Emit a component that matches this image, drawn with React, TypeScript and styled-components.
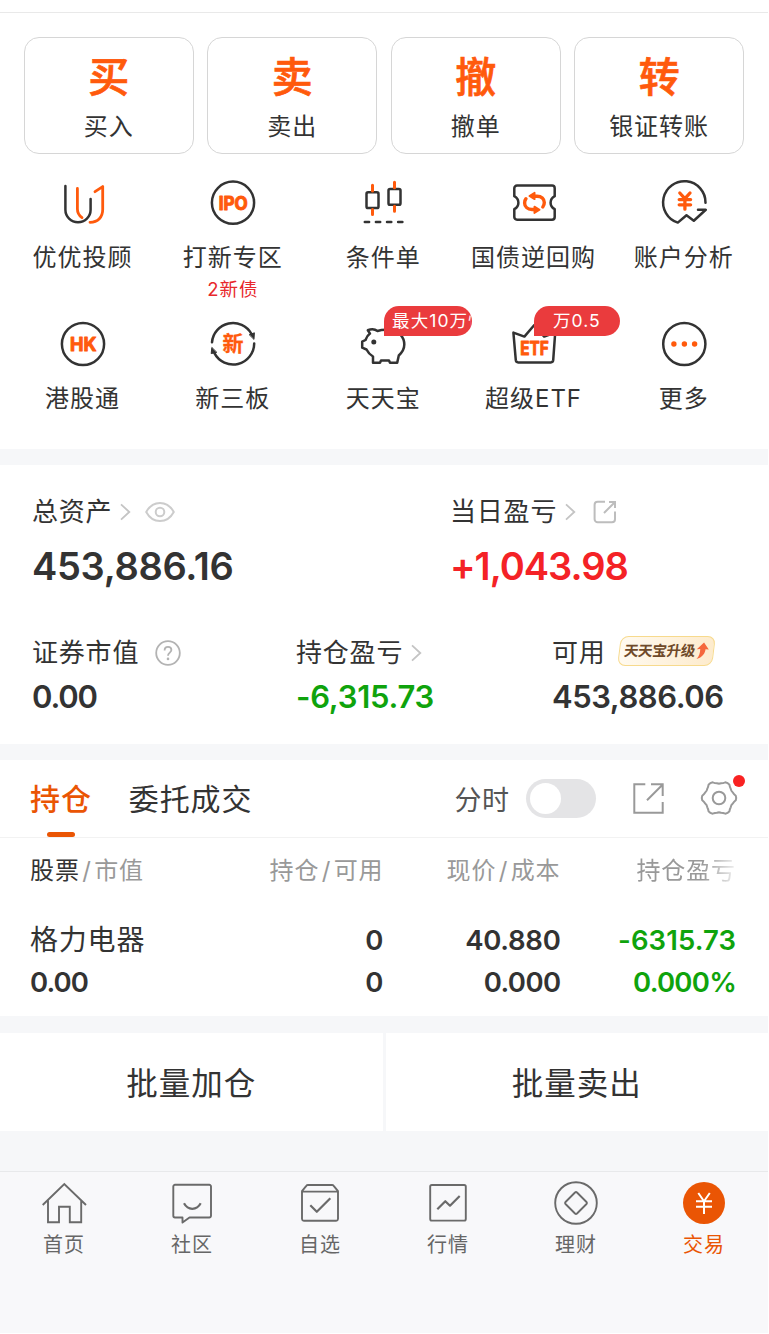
import React from "react";
import styled, { createGlobalStyle } from "styled-components";

const INK = "#333333";
const ORANGE = "#ff5a0c";
const BRAND = "#ea5504";
const RED = "#f42226";
const GREEN = "#0fa30c";

const GlobalStyle = createGlobalStyle`
  * { box-sizing: border-box; }
  body {
    margin: 0;
    background: #fff;
    color: ${INK};
    font-family: Inter, "Noto Sans CJK SC", sans-serif;
  }
  svg { display: block; flex: none; }
`;

const Page = styled.div`
  width: 768px;
  height: 1334px;
  overflow: hidden;
  display: flex;
  flex-direction: column;
`;

const TopRule = styled.div`
  height: 13px;
  border-bottom: 1px solid #e9e9e9;
  flex: none;
`;

const Spacer = styled.div<{ $h: number }>`
  height: ${(p) => p.$h}px;
  flex: none;
  background: #f6f7f9;
`;

/* ---------- trade buttons ---------- */

const TradeRow = styled.div`
  display: grid;
  grid-template-columns: repeat(4, 1fr);
  gap: 13.7px;
  padding: 24px 24px 0 24px;
`;

const TradeCard = styled.div`
  height: 117px;
  border: 1.3px solid #d6d6d6;
  border-radius: 15px;
  display: flex;
  flex-direction: column;
  align-items: center;
  padding-top: 15px;
`;

const TradeGlyph = styled.div`
  font-size: 41px;
  line-height: 48px;
  font-weight: 500;
  -webkit-text-stroke: 0.7px ${ORANGE};
  color: ${ORANGE};
`;

const TradeLabel = styled.div`
  margin-top: 11px;
  font-size: 24px;
  line-height: 30px;
  letter-spacing: 1px;
`;

/* ---------- shortcuts ---------- */

const ShortcutGrid = styled.div`
  display: grid;
  grid-template-columns: repeat(5, 1fr);
  grid-template-rows: 140.5px 129px;
  padding: 25px 9px 0 7.4px;
`;

const Shortcut = styled.div`
  position: relative;
  display: flex;
  flex-direction: column;
  align-items: center;
`;

const ShortcutLabel = styled.div`
  margin-top: 16px;
  font-size: 24px;
  line-height: 30px;
  letter-spacing: 1px;
  white-space: nowrap;
`;

const ShortcutNote = styled.div`
  margin-top: 3px;
  font-size: 18.5px;
  line-height: 26px;
  letter-spacing: 1px;
  color: #e8282c;
`;

const Bubble = styled.div<{ $w: number; $center?: boolean }>`
  position: absolute;
  left: 75.5px;
  top: -13.5px;
  width: ${(p) => p.$w}px;
  height: 29.5px;
  padding: 0 ${(p) => (p.$center ? 0 : 1)}px 0 ${(p) => (p.$center ? 0 : 8.5)}px;
  border-radius: 15px 15px 15px 0;
  background: #ea3b3d;
  color: #fff;
  text-align: ${(p) => (p.$center ? "center" : "left")};
`;

const BubbleText = styled.div`
  overflow: hidden;
  white-space: nowrap;
  font-size: 17.5px;
  line-height: 30.5px;
  letter-spacing: 1.1px;
`;

const IconText = styled.text`
  font-family: Inter, "Noto Sans CJK SC", sans-serif;
  font-weight: 700;
  fill: ${ORANGE};
  text-anchor: middle;
`;

const Glyph = ({ children, size = 48 }: { children: React.ReactNode; size?: number }) => (
  <svg width={size} height={size} viewBox="0 0 48 48" fill="none" stroke={INK} strokeWidth={2.5} strokeLinecap="round" strokeLinejoin="round">
    {children}
  </svg>
);

const AdvisorIcon = () => (
  <Glyph>
    <path d="M6.4 6.9V30.7A12.6 12.6 0 0 0 31.6 30.7V20" />
    <g stroke={ORANGE} strokeWidth={2.8}>
      <path d="M18.4 9.5V30C18.4 34 20 36.5 23 38.7" />
      <path d="M36 12.7L43.7 7.6V30.5C43.7 38 39 43.3 31 43.3" />
    </g>
  </Glyph>
);

const IpoIcon = () => (
  <Glyph>
    <circle cx="24" cy="23.7" r="21.1" />
    <IconText x="24.2" y="30.6" fontSize="18.5" textLength="29" lengthAdjust="spacingAndGlyphs" stroke={ORANGE} strokeWidth={1.1}>IPO</IconText>
  </Glyph>
);

const CandleIcon = () => (
  <Glyph>
    <rect x="7.5" y="13.3" width="12" height="15.8" rx="1.6" />
    <rect x="29.5" y="10" width="12" height="15.8" rx="1.6" />
    <path d="M13.5 6.2V12M13.5 30.5V35.5M35.5 3.2V8.7M35.5 27.2V32.3" stroke={ORANGE} strokeWidth={3} />
    <path d="M5.8 43.1H44" strokeDasharray="4.3 6.8" />
  </Glyph>
);

const TicketIcon = () => (
  <Glyph>
    <path d="M7 6.6H42A2.7 2.7 0 0 1 44.7 9.3V17.2C41.8 18.8 40.6 21 40.6 23.7S41.8 28.6 44.7 30.2V38A2.7 2.7 0 0 1 42 40.7H7A2.7 2.7 0 0 1 4.3 38V30.2C7.2 28.6 8.4 26.4 8.4 23.7S7.2 18.8 4.3 17.2V9.3A2.7 2.7 0 0 1 7 6.6Z" />
    <g stroke={ORANGE} strokeWidth={3.4}>
      <path d="M24 17.2H27C31.5 17.2 34.3 20 34.3 23.6C34.3 25.4 33.8 26.8 32.8 28" />
      <path d="M25 30.5H22C17.5 30.5 14.6 27.6 14.6 24C14.6 22.2 15.1 20.8 16 19.7" />
    </g>
    <path d="M19.4 17L24.6 13.8V20.2ZM29.6 30.8L24.4 27.6V34Z" fill={ORANGE} stroke={ORANGE} strokeWidth={1.8} />
  </Glyph>
);

const AnalysisIcon = () => (
  <Glyph>
    <path d="M45.5 23.7A21.2 21.2 0 1 0 17.8 43.6L26.5 36.2L33.8 41.7L45.8 30.8H38" />
    <path d="M19.8 14L24.9 19.6L30 14M24.9 19.6V30.2M19.2 20.6H30.6M19.2 25.8H30.6" stroke={ORANGE} strokeWidth={3.3} />
  </Glyph>
);

const HkIcon = () => (
  <Glyph>
    <circle cx="24" cy="24" r="21.1" />
    <IconText x="24.3" y="30.8" fontSize="18.5" textLength="26.5" lengthAdjust="spacingAndGlyphs" stroke={ORANGE} strokeWidth={1}>HK</IconText>
  </Glyph>
);

const NewBoardIcon = () => (
  <Glyph>
    <path d="M3 22.3A21.1 21.1 0 0 1 42.4 13.8M45.2 23.6A21.1 21.1 0 0 1 5.4 33.2" />
    <path d="M40.6 14.6L45.4 12.8L45 19ZM7.4 32.4L2.2 33.6L2.8 27.8Z" fill={INK} strokeWidth={1} />
    <IconText x="24" y="31.4" fontSize="21" stroke={ORANGE} strokeWidth={0.3}>新</IconText>
  </Glyph>
);

const PigIcon = () => (
  <Glyph>
    <path d="M8.8 10.2C12 8.8 16 9 18.5 11C22 9.7 28 9.5 32 10C40 11 45.3 17 45.3 24.5C45.3 29.5 42.5 33 39.8 35.5L38.2 42.8H31L30 40.5H22L21 42.8H14V36.5C11 34.8 9 32.5 7.5 29.5L3.2 27.7V21.7L6.5 20C7.5 17 9 15 11 13.6Z" />
    <circle cx="14.8" cy="22" r="2.5" fill={INK} stroke="none" />
  </Glyph>
);

const EtfIcon = () => (
  <Glyph>
    <path d="M3.4 12.6L14.4 16.6L24.3 5L34.2 16.6L45.2 12.6L43.2 40.2A2.5 2.5 0 0 1 40.8 42.4H8.2A2.5 2.5 0 0 1 5.8 40.2Z" />
    <IconText x="24.5" y="35" fontSize="18.5" textLength="28.5" lengthAdjust="spacingAndGlyphs" stroke={ORANGE} strokeWidth={1}>ETF</IconText>
  </Glyph>
);

const MoreIcon = () => (
  <Glyph>
    <circle cx="24.3" cy="24" r="21.1" />
    <g fill={ORANGE} stroke="none">
      <circle cx="13.9" cy="24" r="2.7" />
      <circle cx="24.4" cy="24" r="2.7" />
      <circle cx="34.6" cy="24" r="2.7" />
    </g>
  </Glyph>
);

const shortcuts: { label: string; icon: React.ReactNode; note?: string; bubble?: string; center?: boolean; w?: number }[] = [
  { label: "优优投顾", icon: <AdvisorIcon /> },
  { label: "打新专区", icon: <IpoIcon />, note: "2新债" },
  { label: "条件单", icon: <CandleIcon /> },
  { label: "国债逆回购", icon: <TicketIcon /> },
  { label: "账户分析", icon: <AnalysisIcon /> },
  { label: "港股通", icon: <HkIcon /> },
  { label: "新三板", icon: <NewBoardIcon /> },
  { label: "天天宝", icon: <PigIcon />, bubble: "最大10万快取", w: 88 },
  { label: "超级ETF", icon: <EtfIcon />, bubble: "万0.5", center: true, w: 86 },
  { label: "更多", icon: <MoreIcon /> },
];

/* ---------- assets ---------- */

const Assets = styled.section`
  height: 279px;
  flex: none;
  padding: 31px 0 0 32px;
`;

const AssetRow = styled.div<{ $cols: string }>`
  display: grid;
  grid-template-columns: ${(p) => p.$cols};
  & + & { margin-top: 47px; }
`;

const AssetLabel = styled.div`
  display: flex;
  align-items: center;
  height: 32px;
  font-size: 26px;
  line-height: 32px;
  letter-spacing: 0.8px;
  white-space: nowrap;
`;

const LabelText = styled.span`
  padding-top: 1px;
`;

const Gap = styled.span<{ $w: number }>`
  width: ${(p) => p.$w}px;
  flex: none;
`;

const Amount = styled.div<{ $color?: string; $track: number }>`
  margin-top: 14px;
  height: 48px;
  font-size: 38px;
  line-height: 48px;
  font-weight: 600;
  letter-spacing: ${(p) => p.$track}px;
  color: ${(p) => p.$color ?? INK};
`;

const SubAmount = styled.div<{ $color?: string; $track: number }>`
  margin-top: 8px;
  font-size: 31px;
  line-height: 40px;
  font-weight: 600;
  letter-spacing: ${(p) => p.$track}px;
  color: ${(p) => p.$color ?? INK};
`;

const UpgradeTag = styled.span`
  display: flex;
  align-items: center;
  gap: 1px;
  width: 95px;
  height: 30px;
  margin-top: -3px;
  padding-left: 4px;
  border: 1.5px solid #f7da8d;
  border-radius: 8px;
  background: linear-gradient(90deg, #fffaf0, #fdebcd);
  transform: skewX(-7deg);
  color: #6f4a2a;
  font-size: 14.5px;
  line-height: 20px;
  font-weight: 700;
  letter-spacing: -0.3px;
`;

const Chevron = () => (
  <svg width="11" height="18" viewBox="0 0 11 18" fill="none" stroke="#c4c4c4" strokeWidth="1.8">
    <path d="M1 1.3L9.3 9L1 16.7" />
  </svg>
);

const Eye = () => (
  <svg width="30" height="22" viewBox="0 0 30 22" fill="none" stroke="#cccccc" strokeWidth="2">
    <path d="M1.2 11C4.6 4.8 9.4 1.9 15 1.9S25.4 4.8 28.8 11C25.4 17.2 20.6 20.1 15 20.1S4.6 17.2 1.2 11Z" strokeLinejoin="round" />
    <circle cx="15" cy="11" r="4.3" />
  </svg>
);

const ShareRound = () => (
  <svg width="24" height="24" viewBox="0 0 24 24" fill="none" stroke="#bdbdbd" strokeWidth="2">
    <path d="M12 1.8H4.6A3 3 0 0 0 1.6 4.8V19.2A3 3 0 0 0 4.6 22.2H19A3 3 0 0 0 22 19.2V11.5" />
    <path d="M11 13L21.8 2.2M16 2H22V8" />
  </svg>
);

const Help = () => (
  <svg width="26" height="26" viewBox="0 0 26 26" fill="none" stroke="#b3b3b3" strokeWidth="1.8">
    <circle cx="13" cy="13" r="11.8" />
    <path d="M9.6 10.4C9.6 8.2 11 6.9 13 6.9S16.4 8.2 16.4 10.1C16.4 12.6 13 12.8 13 15.8" />
    <circle cx="13" cy="18.9" r="1.3" fill="#b3b3b3" stroke="none" />
  </svg>
);

const RiseArrow = () => (
  <svg width="13" height="18" viewBox="0 0 13 18">
    <path d="M7 0.5L12.6 7.6L9.3 7.3C9.5 11.5 7 15.5 1.5 17C4 14 4.4 11 4 7.1L0.6 7.2Z" fill="#f5673c" />
  </svg>
);

/* ---------- holdings ---------- */

const TabsRow = styled.div`
  display: flex;
  align-items: center;
  height: 78px;
  flex: none;
  padding-left: 30px;
  border-bottom: 1.5px solid #f2f2f2;
  font-size: 30px;
  letter-spacing: 0.9px;
`;

const Tab = styled.div<{ $active?: boolean }>`
  position: relative;
  height: 77px;
  line-height: 79px;
  margin-right: 37px;
  font-weight: ${(p) => (p.$active ? 500 : 400)};
  color: ${(p) => (p.$active ? BRAND : INK)};
  &::after {
    content: "";
    display: ${(p) => (p.$active ? "block" : "none")};
    position: absolute;
    left: 17px;
    bottom: 0;
    width: 27.5px;
    height: 5px;
    border-radius: 2.5px;
    background: ${BRAND};
  }
`;

const Tools = styled.div`
  display: flex;
  align-items: center;
  margin-left: auto;
  padding-right: 30.5px;
  color: #555;
  font-size: 27px;
  letter-spacing: 0.5px;
`;

const Toggle = styled.div`
  width: 70px;
  height: 39px;
  margin: 0 37px 0 16px;
  padding: 4px;
  border-radius: 20px;
  background: #e4e4e6;
  &::before {
    content: "";
    display: block;
    width: 31px;
    height: 31px;
    border-radius: 50%;
    background: #fff;
  }
`;

const SettingsWrap = styled.div`
  position: relative;
  margin-left: 36px;
`;

const Dot = styled.span`
  position: absolute;
  right: -7px;
  top: -4.5px;
  width: 12px;
  height: 12px;
  border-radius: 50%;
  background: #f92222;
`;

const ShareSquare = () => (
  <svg width="31" height="31" viewBox="0 0 31 31" fill="none" stroke="#999" strokeWidth="2">
    <path d="M12.3 1.3H1.3V29.7H29.7V19" />
    <path d="M14 17.3L29.5 1.8M18 1.3H29.7V13" />
  </svg>
);

const polar = (deg: number, r: number) => {
  const t = (deg * Math.PI) / 180;
  return `${(19 + r * Math.cos(t)).toFixed(2)} ${(19 + r * Math.sin(t)).toFixed(2)}`;
};

/* Six short teeth joined by shallow concave curves. */
const gearPath =
  `M${polar(-8, 16.9)}` +
  [0, 60, 120, 180, 240, 300]
    .map((a) => `Q${polar(a, 17.7)} ${polar(a + 8, 16.9)}Q${polar(a + 15, 15.3)} ${polar(a + 22, 14.9)}Q${polar(a + 30, 14)} ${polar(a + 38, 14.9)}Q${polar(a + 45, 15.3)} ${polar(a + 52, 16.9)}`)
    .join("") +
  "Z";

const Gear = () => (
  <svg width="38" height="38" viewBox="0 0 38 38" fill="none" stroke="#999" strokeWidth="2" strokeLinejoin="round">
    <path d={gearPath} />
    <circle cx="19" cy="19" r="6.3" />
  </svg>
);

const Table = styled.div`
  height: 178px;
  flex: none;
  padding: 16px 0 0 30px;
`;

const TableLine = styled.div`
  display: grid;
  grid-template-columns: 150px 203.5px 177px 175.5px;
  text-align: right;
  & > :first-child { text-align: left; }
`;

const HeadLine = styled(TableLine)`
  font-size: 24px;
  line-height: 33px;
  letter-spacing: 0.9px;
  color: #999;
  margin-bottom: 32px;
  b { font-weight: 400; color: ${INK}; }
  i { font-style: normal; padding: 0 2.4px; }
`;

const Faded = styled.span`
  mask-image: linear-gradient(90deg, #000 calc(100% - 34px), rgba(0, 0, 0, 0.15));
`;

const DataLine = styled(TableLine)`
  height: 42px;
  font-size: 27.5px;
  line-height: 42px;
  font-weight: 600;
`;

const Figure = styled.span<{ $track?: number; $loss?: boolean }>`
  letter-spacing: ${(p) => p.$track ?? 0}px;
  color: ${(p) => (p.$loss ? GREEN : INK)};
`;

const StockName = styled.span`
  font-size: 28px;
  line-height: 43px;
  font-weight: 400;
  letter-spacing: 0.8px;
`;

/* ---------- batch actions ---------- */

const BatchRow = styled.div`
  display: grid;
  grid-template-columns: 1fr 1fr;
  gap: 3px;
  height: 98px;
  flex: none;
  background: #f6f7f9;
`;

const BatchButton = styled.div`
  height: 98px;
  background: #fff;
  text-align: center;
  font-size: 31.5px;
  line-height: 102px;
  letter-spacing: 1px;
`;

/* ---------- bottom navigation ---------- */

const NavBar = styled.nav`
  display: grid;
  grid-template-columns: repeat(6, 1fr);
  height: 162px;
  flex: none;
  padding: 7px 0 0 0;
  border-top: 1.5px solid #e8e9eb;
  background: #f8f8fa;
`;

const NavItem = styled.div<{ $active?: boolean }>`
  display: flex;
  flex-direction: column;
  align-items: center;
  font-size: 20px;
  line-height: 26px;
  letter-spacing: 0.9px;
  color: ${(p) => (p.$active ? BRAND : "#666")};
  svg { margin-bottom: 5px; }
`;

const NavGlyph = ({ children }: { children: React.ReactNode }) => (
  <svg width="48" height="48" viewBox="0 0 48 48" fill="none" stroke="#6a6a6a" strokeWidth="1.9" strokeLinejoin="round">
    {children}
  </svg>
);

const navItems: { label: string; active?: boolean; icon: React.ReactNode }[] = [
  {
    label: "首页",
    icon: <path d="M2.7 26L24.3 5L46 26M8 21.3V43.3H19V27.8H29.8V43.3H41.2V21.3" strokeLinejoin="miter" />,
  },
  {
    label: "社区",
    icon: (
      <>
        <path d="M7 5.8H41.3A1.7 1.7 0 0 1 43 7.5V36.8A1.7 1.7 0 0 1 41.3 38.5H21.5L14.5 43.6V38.5H7A1.7 1.7 0 0 1 5.3 36.8V7.5A1.7 1.7 0 0 1 7 5.8Z" />
        <path d="M16 24.3C18 28 20.8 29.8 24.3 29.8S30.7 28 32.7 24.3" strokeWidth="2.2" />
      </>
    ),
  },
  {
    label: "自选",
    icon: (
      <>
        <path d="M6 12.2L10.3 6.8Q10.9 6 12 6H36Q37.1 6 37.7 6.8L42 12.2V40A1.9 1.9 0 0 1 40.1 41.7H7.9A1.9 1.9 0 0 1 6 40ZM6 12.6H42" />
        <path d="M14.3 26.3L20.8 32.8L34.3 19.3" strokeWidth="2.2" />
      </>
    ),
  },
  {
    label: "行情",
    icon: (
      <>
        <rect x="6.2" y="6" width="35.6" height="35.6" rx="1.6" />
        <path d="M13.3 30.3L21.3 22.2L26 26.7L35.7 17" strokeWidth="2.2" />
      </>
    ),
  },
  {
    label: "理财",
    icon: (
      <>
        <circle cx="24" cy="24" r="20.8" />
        <path d="M23 13.5Q24 12.6 25 13.5L34.5 23Q35.4 24 34.5 25L25 34.5Q24 35.4 23 34.5L13.5 25Q12.6 24 13.5 23Z" />
      </>
    ),
  },
  {
    label: "交易",
    active: true,
    icon: (
      <>
        <circle cx="24" cy="24" r="21" fill={BRAND} stroke="none" />
        <path d="M18.3 14L24 22.3L29.8 14M24 22.3V35M16 22.2H32M16 27.8H32" stroke="#fff" strokeWidth="2" />
      </>
    ),
  },
];

export default function App() {
  return (
    <Page>
      <GlobalStyle />
      <TopRule />
      <TradeRow>
        {[["买", "买入"], ["卖", "卖出"], ["撤", "撤单"], ["转", "银证转账"]].map(([g, t]) => (
          <TradeCard key={t}>
            <TradeGlyph>{g}</TradeGlyph>
            <TradeLabel>{t}</TradeLabel>
          </TradeCard>
        ))}
      </TradeRow>
      <ShortcutGrid>
        {shortcuts.map((s) => (
          <Shortcut key={s.label}>
            {s.icon}
            <ShortcutLabel>{s.label}</ShortcutLabel>
            {s.note && <ShortcutNote>{s.note}</ShortcutNote>}
            {s.bubble && (
              <Bubble $w={s.w ?? 86} $center={s.center}>
                <BubbleText>{s.bubble}</BubbleText>
              </Bubble>
            )}
          </Shortcut>
        ))}
      </ShortcutGrid>
      <Spacer $h={16} />
      <Assets>
        <AssetRow $cols="418px 1fr">
          <div>
            <AssetLabel><LabelText>总资产</LabelText><Gap $w={8} /><Chevron /><Gap $w={14} /><Eye /></AssetLabel>
            <Amount $track={-0.3}>453,886.16</Amount>
          </div>
          <div>
            <AssetLabel><LabelText>当日盈亏</LabelText><Gap $w={8} /><Chevron /><Gap $w={17} /><ShareRound /></AssetLabel>
            <Amount $color={RED} $track={-1}>+1,043.98</Amount>
          </div>
        </AssetRow>
        <AssetRow $cols="264px 256px 1fr">
          <div>
            <AssetLabel><LabelText>证券市值</LabelText><Gap $w={16} /><Help /></AssetLabel>
            <SubAmount $track={-1.2}>0.00</SubAmount>
          </div>
          <div>
            <AssetLabel><LabelText>持仓盈亏</LabelText><Gap $w={8} /><Chevron /></AssetLabel>
            <SubAmount $color={GREEN} $track={-0.25}>-6,315.73</SubAmount>
          </div>
          <div>
            <AssetLabel><LabelText>可用</LabelText><Gap $w={13} /><UpgradeTag>天天宝升级<RiseArrow /></UpgradeTag></AssetLabel>
            <SubAmount $track={-0.45}>453,886.06</SubAmount>
          </div>
        </AssetRow>
      </Assets>
      <Spacer $h={16} />
      <TabsRow>
        <Tab $active>持仓</Tab>
        <Tab>委托成交</Tab>
        <Tools>
          <LabelText>分时</LabelText>
          <Toggle />
          <ShareSquare />
          <SettingsWrap>
            <Gear />
            <Dot />
          </SettingsWrap>
        </Tools>
      </TabsRow>
      <Table>
        <HeadLine>
          <span><b>股票</b><i>/</i>市值</span>
          <span>持仓<i>/</i>可用</span>
          <span>现价<i>/</i>成本</span>
          <Faded>持仓盈亏</Faded>
        </HeadLine>
        <DataLine>
          <StockName>格力电器</StockName>
          <Figure>0</Figure>
          <Figure $track={-0.3}>40.880</Figure>
          <Figure $loss $track={0.1}>-6315.73</Figure>
        </DataLine>
        <DataLine>
          <Figure $track={-0.9}>0.00</Figure>
          <Figure>0</Figure>
          <Figure $track={-0.6}>0.000</Figure>
          <Figure $loss $track={-0.75}>0.000%</Figure>
        </DataLine>
      </Table>
      <Spacer $h={17} />
      <BatchRow>
        <BatchButton>批量加仓</BatchButton>
        <BatchButton>批量卖出</BatchButton>
      </BatchRow>
      <Spacer $h={40} />
      <NavBar>
        {navItems.map((n) => (
          <NavItem key={n.label} $active={n.active}>
            <NavGlyph>{n.icon}</NavGlyph>
            {n.label}
          </NavItem>
        ))}
      </NavBar>
    </Page>
  );
}
